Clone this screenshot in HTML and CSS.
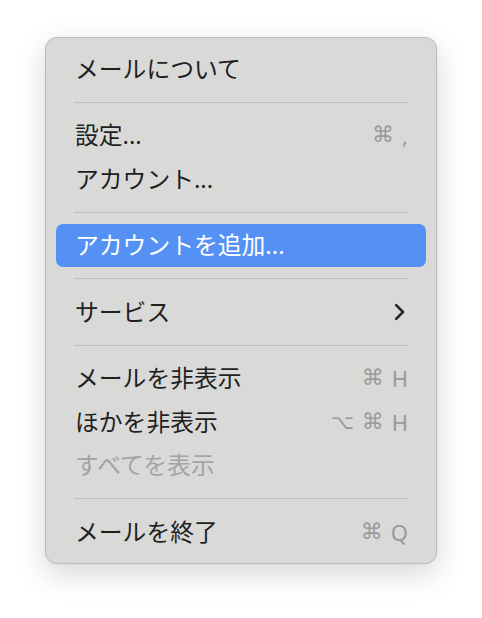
FILE: index.html
```html
<!DOCTYPE html>
<html lang="ja">
<head>
<meta charset="utf-8">
<link rel="stylesheet" href="styles.css">
</head>
<body>
<div class="menu">
  <div class="item"><span class="label">メールについて</span></div>
  <div class="sep"></div>
  <div class="item"><span class="label">設定...</span><span class="keys"><span class="sym">⌘</span><span class="chr">,</span></span></div>
  <div class="item"><span class="label">アカウント...</span></div>
  <div class="sep"></div>
  <div class="item active"><span class="label">アカウントを追加...</span></div>
  <div class="sep"></div>
  <div class="item"><span class="label">サービス</span>
    <svg class="chev" width="12" height="18" viewBox="0 0 12 18"><path d="M2.2 2.2 L9 9 L2.2 15.8" fill="none" stroke="#262626" stroke-width="2.6" stroke-linecap="round" stroke-linejoin="round"/></svg>
  </div>
  <div class="sep"></div>
  <div class="item"><span class="label">メールを非表示</span><span class="keys"><span class="sym">⌘</span><span class="chr">H</span></span></div>
  <div class="item"><span class="label">ほかを非表示</span><span class="keys"><span class="sym opt">⌥</span><span class="sym">⌘</span><span class="chr">H</span></span></div>
  <div class="item disabled"><span class="label">すべてを表示</span></div>
  <div class="sep"></div>
  <div class="item"><span class="label">メールを終了</span><span class="keys"><span class="sym">⌘</span><span class="chr">Q</span></span></div>
</div>
</body>
</html>
```

FILE: styles.css
```css
html, body {
  margin: 0;
  padding: 0;
  background: #ffffff;
}
body {
  padding: 37px 0 0 45px;
  width: 482px;
  height: 618px;
  box-sizing: border-box;
  overflow: hidden;
}
.menu {
  width: 392px;
  box-sizing: border-box;
  background: #d9d9d8;
  border: 1px solid #bcbcbc;
  border-radius: 12px;
  padding: 9px 10px 9.5px 10px;
  box-shadow: 0 10px 30px rgba(0, 0, 0, 0.16), 0 0 2px rgba(0, 0, 0, 0.08);
  font-family: "Noto Sans", "Noto Sans CJK JP", sans-serif;
  color: #1f1f1f;
}
.item {
  height: 43.5px;
  display: flex;
  align-items: center;
  justify-content: space-between;
  padding: 0 18px 0 19px;
  border-radius: 7px;
}
.label {
  font-size: 23.8px;
  font-weight: 400;
  line-height: 1;
  position: relative;
  top: 1px;
}
.item.active {
  background: #5591f4;
  color: #ffffff;
}
.item.disabled {
  color: #a4a4a4;
}
.sep {
  height: 1px;
  background: #bfbfbf;
  margin: 11px 18px;
}
.keys {
  display: flex;
  align-items: center;
  gap: 8px;
  color: #9a9a9a;
  font-size: 22px;
  line-height: 1;
}
.sym {
  font-family: "DejaVu Sans", sans-serif;
  font-size: 22px;
}
.sym.opt {
  font-size: 20px;
}
.chr {
  font-family: "Noto Sans", sans-serif;
}
.chev {
  display: block;
  margin-right: 2px;
}
```
